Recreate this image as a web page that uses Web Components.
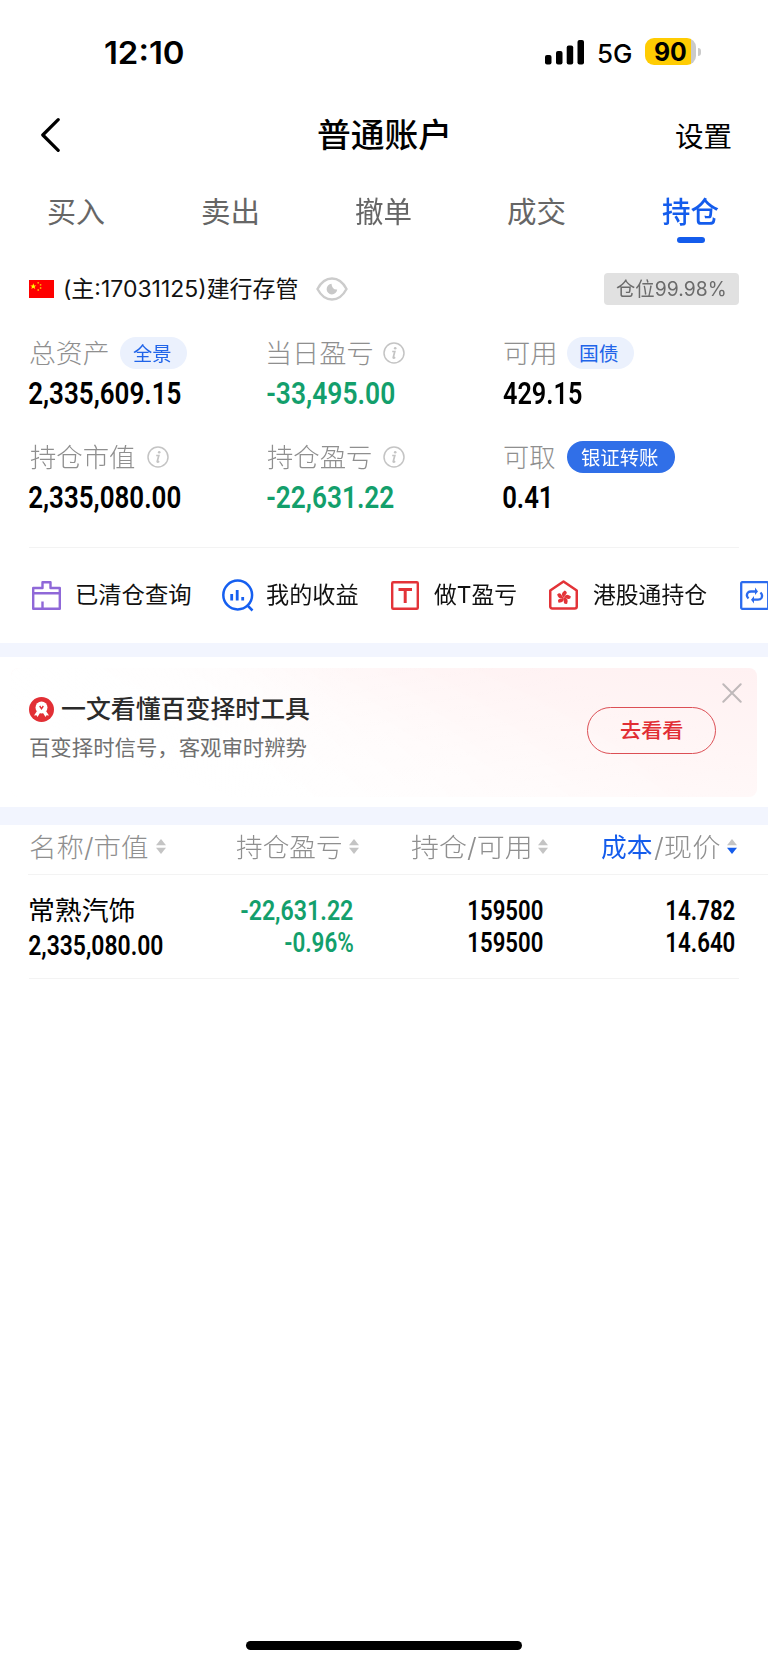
<!DOCTYPE html>
<html lang="zh-CN">
<head>
<meta charset="utf-8">
<title>普通账户</title>
<style>
html,body{margin:0;background:#fff}
body{width:768px;height:1665px;overflow:hidden;font-family:Inter,"Noto Sans CJK SC",sans-serif}
</style>
</head>
<body>
<account-page></account-page>
<script>
const UI = 'Inter, "Noto Sans CJK SC", sans-serif';
const NUM = 'Roboto, "Noto Sans CJK SC", sans-serif';
const ctx = document.createElement('canvas').getContext('2d');

function define(name, html, setup) {
  const tpl = document.createElement('template');
  tpl.innerHTML = html;
  customElements.define(name, class extends HTMLElement {
    connectedCallback() {
      if (this.shadowRoot) return;
      this.attachShadow({mode: 'open'}).append(tpl.content.cloneNode(true));
      if (setup) setup(this, this.shadowRoot);
    }
  });
}

/* One line of text whose inked width is exactly `w` pixels. */
define('fit-text', `<style>
  :host{display:block;flex:none;white-space:nowrap}
  span{display:block;width:max-content;transform-origin:0 50%}
  </style><span><slot></slot></span>`, (el, root) => {
  const w = +el.getAttribute('w'), size = +el.getAttribute('size');
  const weight = el.getAttribute('weight') || 400;
  const family = el.hasAttribute('num') ? NUM : UI;
  const span = root.querySelector('span');
  ctx.font = `${weight} ${size}px ${family}`;
  const m = ctx.measureText(el.textContent);
  const k = w / (m.actualBoundingBoxRight + m.actualBoundingBoxLeft);
  el.style.width = w + 'px';
  el.style.height = el.style.lineHeight = Math.round(size * 1.2 / 2) * 2 + 'px';
  span.style.font = `${weight} ${size}px/${el.style.lineHeight} ${family}`;
  span.style.transform = `translateX(${m.actualBoundingBoxLeft * k}px) scaleX(${k})`;
});

define('status-bar', `<style>
  :host{display:flex;height:106px;box-sizing:border-box;padding-left:105px;align-items:center;color:#000}
  svg{display:block;flex:none}
  .sig{margin-left:362px;margin-top:-2px}
  .net{margin-left:14px;padding-top:1px}
  .bat{margin-left:14px;display:flex;align-items:center;margin-top:-3px}
  .body{width:51px;height:27px;border-radius:9px;background:linear-gradient(90deg,#ffcc02 46px,#cacaca 46px);display:flex;align-items:center;padding-left:10px;box-sizing:border-box}
  .tip{width:3.5px;height:8px;margin-left:1.5px;background:#cacaca;border-radius:0 4px 4px 0}
  </style>
  <fit-text w="78" size="31" weight="600">12:10</fit-text>
  <svg class="sig" width="39" height="25" viewBox="0 0 39 25"><g><rect y="15" width="6.5" height="9.5" rx="2"/><rect x="11" y="11" width="6.5" height="13.5" rx="2"/><rect x="21.7" y="5.6" width="6.5" height="18.9" rx="2"/><rect x="32.5" y="0" width="6.5" height="24.5" rx="2"/></g></svg>
  <fit-text class="net" w="33" size="26" weight="500">5G</fit-text>
  <div class="bat"><div class="body"><fit-text w="31" size="25" weight="700">90</fit-text></div><div class="tip"></div></div>`);

define('nav-bar', `<style>
  :host{display:grid;grid-template-columns:60px 1fr 60px;align-items:center;height:60px;padding:0 37px 0 41px;color:#000}
  svg{display:block;margin-bottom:2px}
  .t{justify-self:center;margin-left:-6px;margin-bottom:3px}
  .s{justify-self:end;padding-top:1px}
  </style>
  <svg width="19" height="34" viewBox="0 0 19 34"><path d="M17.2 1.7 1.8 17l15.4 15.3" fill="none" stroke="#000" stroke-width="3.2" stroke-linecap="round" stroke-linejoin="round"/></svg>
  <fit-text class="t" w="130" size="33" weight="500">普通账户</fit-text>
  <fit-text class="s" w="55" size="28">设置</fit-text>`);

define('tab-item', `<style>
  :host{display:flex;flex-direction:column;align-items:center;color:#666;padding-top:30px}
  :host([active]){color:#145cec}
  ::slotted(*){margin-left:-2px}
  i{display:none;width:28px;height:6px;border-radius:3px;background:#145cec;margin-top:7px}
  :host([active]) i{display:block}
  </style><slot></slot><i></i>`);
define('tab-bar', `<style>
  :host{display:grid;grid-template-columns:repeat(5,1fr);height:86px}
  </style>
  <tab-item><fit-text w="56" size="29">买入</fit-text></tab-item>
  <tab-item><fit-text w="55" size="29">卖出</fit-text></tab-item>
  <tab-item><fit-text w="56" size="29">撤单</fit-text></tab-item>
  <tab-item><fit-text w="57" size="29">成交</fit-text></tab-item>
  <tab-item active><fit-text w="57" size="29" weight="500">持仓</fit-text></tab-item>`);

define('account-line', `<style>
  :host{display:flex;height:74px;align-items:center;padding:0 29px;color:#111}
  svg{display:block;flex:none}
  .n{margin-left:11px}.e{margin-left:18px}
  .tag{margin-left:auto;width:135px;height:32px;border-radius:4px;background:#e1e1e1;color:#6b6b6b;display:flex;align-items:center;justify-content:center}
  </style>
  <svg width="25" height="18" viewBox="0 0 25 18"><path fill="#fe0000" d="M0 0h25v18H0z"/><path fill="#ff0" d="m4.300 3.300.8 2.100h2.200L5.600 6.800l.6 2.200-1.900-1.300L2.400 9 3 6.800 1.300 5.400h2.200z"/><g fill="#ffb000"><circle cx="9.200" cy="2.800" r=".9"/><circle cx="11.600" cy="4.800" r=".9"/><circle cx="11.600" cy="8" r=".9"/><circle cx="9.200" cy="10" r=".9"/></g></svg>
  <fit-text class="n" w="233" size="22.500">(主:17031125)建行存管</fit-text>
  <svg class="e" width="32" height="24" viewBox="0 0 32 24"><path d="M1.500 12Q7 1.500 16 1.500T30.500 12Q25 22.500 16 22.500T1.500 12Z" fill="none" stroke="#ccc" stroke-width="2.400"/><path d="M15.500 6.800A5.300 5.300 0 1 0 21.200 12.600Q16 13 15.500 6.800Z" fill="#c8c8c8"/></svg>
  <div class="tag"><fit-text w="109" size="19.500" style="margin-left:-2px">仓位99.98%</fit-text></div>`);

define('info-icon', `<style>:host{display:block;flex:none;width:22px;height:22px}svg{display:block}</style>
  <svg width="22" height="22" viewBox="0 0 22 22" fill="none" stroke="#c4c4c4"><circle cx="11" cy="11" r="10" stroke-width="1.500"/><path d="M9.200 9.500h2.600L10.200 15.500q0 1.300 2-.2" stroke-width="1.700"/><circle cx="12.200" cy="6.300" r="1.300" fill="#c4c4c4" stroke="none"/></svg>`);

define('pill-tag', `<style>
  :host{display:flex;flex:none;align-items:center;justify-content:center;width:67px;height:32px;border-radius:16px;background:#ebf1fd;color:#2064e9}
  :host([solid]){width:108px;background:#306fe8;color:#fff}
  ::slotted(*){margin:1px 2px 0 0}
  </style><slot></slot>`);

define('asset-cell', `<style>
  :host{display:block;color:#000}
  .l{display:flex;align-items:center;height:32px;color:#8f8f8f;gap:12px;padding-left:.5px}
  .v{margin-top:7px;height:36px}
  :host([down]) .v{color:#139f6c}
  </style><div class="l"><slot name="label"></slot></div><div class="v"><slot></slot></div>`);

define('asset-grid', `<style>
  :host{display:grid;grid-template-columns:237px 237px 1fr;grid-auto-rows:104px;padding:11px 0 0 29px;margin:0 29px 0 0;height:210px;border:0}
  </style>
  <asset-cell><fit-text slot="label" w="78" size="26.500" weight="300">总资产</fit-text><pill-tag slot="label"><fit-text w="38" size="19.500">全景</fit-text></pill-tag><fit-text num w="152" size="30.500" weight="600">2,335,609.15</fit-text></asset-cell>
  <asset-cell down><fit-text slot="label" w="104" size="26.500" weight="300" style="padding-left:1px;margin-right:-1px">当日盈亏</fit-text><info-icon slot="label"></info-icon><fit-text num w="127" size="30.500" weight="600" style="margin-left:1px">-33,495.00</fit-text></asset-cell>
  <asset-cell><fit-text slot="label" w="51" size="26.500" weight="300">可用</fit-text><pill-tag slot="label"><fit-text w="38" size="19.500">国债</fit-text></pill-tag><fit-text num w="79" size="30.500" weight="600">429.15</fit-text></asset-cell>
  <asset-cell><fit-text slot="label" w="105" size="26.500" weight="300">持仓市值</fit-text><info-icon slot="label"></info-icon><fit-text num w="151" size="30.500" weight="600">2,335,080.00</fit-text></asset-cell>
  <asset-cell down><fit-text slot="label" w="104" size="26.500" weight="300">持仓盈亏</fit-text><info-icon slot="label"></info-icon><fit-text num w="127" size="30.500" weight="600" style="margin-left:1px">-22,631.22</fit-text></asset-cell>
  <asset-cell><fit-text slot="label" w="51" size="26.500" weight="300">可取</fit-text><pill-tag slot="label" solid><fit-text w="77" size="19.500">银证转账</fit-text></pill-tag><fit-text num w="46" size="30.500" weight="600">0.41</fit-text></asset-cell>`);

define('quick-links', `<style>
  :host{display:flex;height:96px;align-items:center;color:#111;position:relative;padding-left:32px;overflow:hidden}
  hr{position:absolute;left:29px;right:29px;top:0;margin:0;border:0;border-top:1px solid #f3f3f3;height:0}
  div{display:flex;align-items:center;flex:none}
  svg{display:block;flex:none;overflow:visible}
  </style><hr>
  <div style="gap:15.500px"><svg width="29" height="29" viewBox="0 0 29 29" fill="none" stroke="#8f68d8" stroke-width="2.400" stroke-linejoin="round"><path d="M1.200 7h9.300V1.200h8V7h9.300v20.800H1.200zM1.200 12.300h26.600M10.500 27.500v-7"/></svg><fit-text w="113.500" size="23">已清仓查询</fit-text></div>
  <div style="gap:12px;margin-left:32px"><svg width="32" height="33" viewBox="0 0 32 33" fill="none" stroke="#155ff0" stroke-width="2.500"><circle cx="15.700" cy="16" r="14.400"/><path d="m25.500 26.500 5 5" /><path d="M9.700 15v6.500M15.200 11v10.500M20.700 18v3.500" stroke-width="2.800"/></svg><fit-text w="91.500" size="23">我的收益</fit-text></div>
  <div style="gap:15px;margin-left:33px"><svg width="28" height="29" viewBox="0 0 28 29" fill="none" stroke="#e33338"><rect x="1.200" y="1.200" width="25.600" height="26.600" rx="1" stroke-width="2.400"/><path d="M7.500 8.500H21M14.200 8.500V22" stroke-width="3"/></svg><fit-text w="82" size="23">做T盈亏</fit-text></div>
  <div style="gap:15px;margin-left:33px"><svg width="29" height="30" viewBox="0 0 28 30" preserveAspectRatio="none"><path d="M1.200 10.500 14 1.400l12.800 9.100v16q0 2-2 2H3.200q-2 0-2-2z" fill="none" stroke="#e33338" stroke-width="2.400" stroke-linejoin="round"/><g fill="#e33338" transform="translate(14.200 17.600)"><path d="M0 0Q-4-3.500 1-7Q4-5.500 2.500-3.500Q.9-2 0 0"/><path transform="rotate(72)" d="M0 0Q-4-3.500 1-7Q4-5.500 2.500-3.500Q.9-2 0 0"/><path transform="rotate(144)" d="M0 0Q-4-3.500 1-7Q4-5.500 2.500-3.500Q.9-2 0 0"/><path transform="rotate(216)" d="M0 0Q-4-3.500 1-7Q4-5.500 2.500-3.500Q.9-2 0 0"/><path transform="rotate(288)" d="M0 0Q-4-3.500 1-7Q4-5.500 2.500-3.500Q.9-2 0 0"/></g></svg><fit-text w="114" size="23">港股通持仓</fit-text></div>
  <div style="margin-left:33px"><svg width="29" height="29" viewBox="0 0 29 29" fill="none" stroke="#2b6bee" stroke-width="2.300"><rect x="1.200" y="1.200" width="27" height="26.600" rx="1"/><path d="M8.500 17.500Q5.500 14.500 8 11.500Q9 10.500 11 10.500h5M20.500 11.500Q23 14 21.500 17Q20.500 18.700 18 18.700h-5"/><path d="M15 6.500l3 4-3 3.500zM14 15l-3 3.700 3 3.800z" fill="#2b6bee" stroke="none"/></svg></div>`);

define('section-gap', `<style>:host{display:block;background:#f2f5fe}</style>`);

define('promo-banner', `<style>
  :host{display:block;padding:11px 11px 10px}
  .c{position:relative;display:flex;justify-content:space-between;height:129px;box-sizing:border-box;border-radius:8px;padding:0 41px 0 18px;background:linear-gradient(188deg,#fff1f2 0%,#fff6f6 40%,#fffbfb 80%,#fffdfd 100%)}
  .c::before{content:"";position:absolute;inset:0;background:linear-gradient(20deg,#fff 20%,#fffa 50%,#fff0 80%),linear-gradient(90deg,#fffc 0%,#fff0 45%);border-radius:8px;-webkit-mask:linear-gradient(90deg,#000 30%,#0002 100%)}
  .m,.b{position:relative}
  .h{display:flex;align-items:center;gap:8px;margin-top:26px;color:#2b2b2b;height:30px}
  .s{margin:11px 0 0 1px;color:#707070}
  .b{box-sizing:border-box;width:129px;height:47px;margin-top:39px;border:1.300px solid #dc4f55;border-radius:24px;display:flex;align-items:center;justify-content:center;color:#e12d33}
  .x{position:absolute;right:15px;top:15px}
  svg{display:block}
  </style><div class="c"><div class="m"><div class="h">
  <svg width="25" height="25" viewBox="0 0 25 25"><circle cx="12.500" cy="12.500" r="12.500" fill="#e22f35"/><path d="m8 14-3 4.500 2.500-.2L8.500 20l2.800-4.500zM17 14l3 4.500-2.500-.2-1 1.700-2.800-4.500z" fill="#fff"/><circle cx="12.500" cy="10.500" r="6" fill="#fff"/><path d="m10.700 9 1.800 2.800L14.300 9" fill="none" stroke="#e22f35" stroke-width="1.400"/></svg>
  <fit-text w="248" size="25" weight="500">一文看懂百变择时工具</fit-text></div>
  <fit-text class="s" w="277" size="21">百变择时信号，客观审时辨势</fit-text></div>
  <div class="b"><fit-text w="62" size="20.500" weight="500">去看看</fit-text></div>
  <svg class="x" width="20" height="20" viewBox="0 0 20 20"><path d="m1.300 1.300 17.400 17.400M18.700 1.300 1.300 18.700" stroke="#bfb9ba" stroke-width="2" stroke-linecap="round"/></svg></div>`);

define('sort-arrows', `<style>:host{display:block;flex:none;width:10px;height:15px}svg{display:block}.d{fill:#c4c4c4}:host([desc]) .d{fill:#145cec}</style>
  <svg width="10" height="15" viewBox="0 0 10 15"><path d="M5 0l5 6.200H0z" fill="#c4c4c4"/><path class="d" d="M5 15l5-6.200H0z"/></svg>`);

define('holdings-table', `<style>
  :host{display:block;color:#000}
  .h{display:grid;grid-template-columns:206px 175px 190px auto;height:50px;box-sizing:border-box;padding:0 0 5px 30px;align-items:center;color:#8f8f8f;border-bottom:1px solid;border-image:linear-gradient(90deg,#fff 29px,#f3f3f3 29px) 1}
  .h div{display:flex;align-items:center;gap:8px}
  .h sort-arrows{margin-bottom:1px}
  .on{color:#145cec}
  .h fit-text+fit-text{margin-left:-6px}
  .r{display:grid;grid-template-columns:170px 154px 190px 192px;margin:0 29px;height:103px;border-bottom:1px solid #f3f3f3}
  .r>div{display:flex;flex-direction:column;align-items:flex-end;padding-top:20px}
  .r>div:first-child{align-items:flex-start;padding-top:19px}
  .g{color:#139f6c}
  </style>
  <div class="h">
    <div><fit-text w="118" size="26.500" weight="300">名称/市值</fit-text><sort-arrows></sort-arrows></div>
    <div><fit-text w="105" size="26.500" weight="300">持仓盈亏</fit-text><sort-arrows></sort-arrows></div>
    <div><fit-text w="119" size="26.500" weight="300">持仓/可用</fit-text><sort-arrows></sort-arrows></div>
    <div><fit-text class="on" w="51" size="26.500">成本</fit-text><fit-text w="66" size="26.500" weight="300">/现价</fit-text><sort-arrows desc style="margin-left:-1px"></sort-arrows></div>
  </div>
  <div class="r">
    <div><fit-text w="105" size="26.500" style="margin-left:1px">常熟汽饰</fit-text><fit-text num w="134" size="27" weight="600" style="margin-top:4px">2,335,080.00</fit-text></div>
    <div class="g"><fit-text num w="112" size="27" weight="600">-22,631.22</fit-text><fit-text num w="68" size="27" weight="600">-0.96%</fit-text></div>
    <div><fit-text num w="74" size="27" weight="600">159500</fit-text><fit-text num w="74" size="27" weight="600">159500</fit-text></div>
    <div><fit-text num w="68" size="27" weight="600">14.782</fit-text><fit-text num w="68" size="27" weight="600">14.640</fit-text></div>
  </div>`);

define('home-indicator', `<style>:host{display:block;width:276px;height:9px;border-radius:5px;background:#000;margin:auto auto 15px}</style>`);

define('account-page', `<style>
  :host{display:flex;flex-direction:column;width:768px;height:1665px;background:#fff;overflow:hidden}
  :host>*{flex:none}
  </style>
  <status-bar></status-bar><nav-bar></nav-bar><tab-bar></tab-bar>
  <account-line></account-line><asset-grid></asset-grid><quick-links></quick-links>
  <section-gap style="height:14px"></section-gap><promo-banner></promo-banner><section-gap style="height:18px"></section-gap>
  <holdings-table></holdings-table><home-indicator></home-indicator>`);
</script>
</body>
</html>
